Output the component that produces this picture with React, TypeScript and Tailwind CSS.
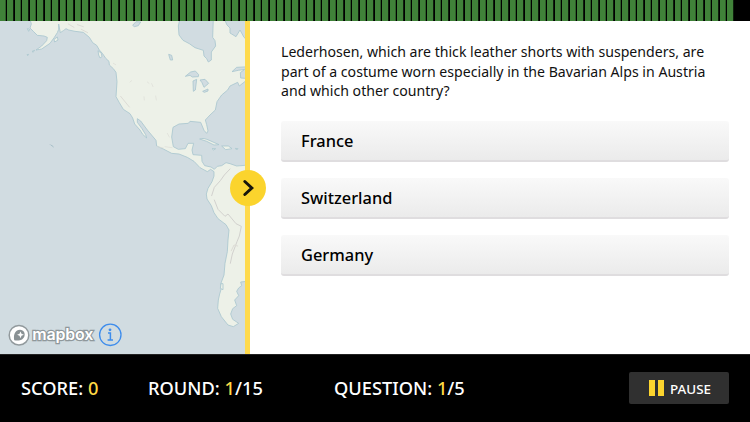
import React, { useState } from 'react';

const answers = ['France', 'Switzerland', 'Germany'];

const WorldMap = () => (
  <svg viewBox="0 63 735 999" className="block h-[333px] w-[245px]" preserveAspectRatio="none">
    <rect y="63" width="735" height="999" fill="#d1dce1" />
    <g fill="#edf1e8" stroke="#a9c6cf" strokeWidth="2.5" strokeLinejoin="round">
      {/* North, Central and South America */}
      <path
        d="M88 50L94 72L90 84L100 94L112 106L132 108L142 112L140 122L125 138L108 150L125 147L150 130L163 112L172 98L176 88L176 72L181 98L190 92L198 86L206 90L225 94L250 97L268 112L278 128L290 136L298 150L307 160L318 176L327 184L328 195L340 206L348 217L351 245L348 290L358 308L370 328L390 341L398 354L404 372L420 390L428 403L440 414L437 404L426 386L412 367L412 356L422 363L442 390L468 421L470 438L490 447L515 460L537 462L562 472L582 484L600 503L622 515L632 508L642 515L642 528L636 545L624 565L619 582L621 597L634 617L642 638L654 656L678 674L687 690L684 720L682 755L675 790L672 825L662 852L664 865L659 882L655 900L653 925L664 950L684 975L700 980L716 970L698 958L692 942L698 926L710 917L704 900L716 887L710 874L716 864L725 857L722 846L760 842L760 498L735 496L710 498L690 491L678 488L665 497L652 499L643 508L633 501L614 497L606 484L605 466L579 464L576 450L581 430L564 430L556 446L535 448L520 440L515 411L519 382L537 372L565 370L570 364L602 367L612 391L620 400L624 393L620 374L616 360L630 345L646 330L651 305L665 285L683 270L690 258L713 247L718 258L738 242L760 230V50Z"
      />
      <path d="M599 417Q610 412 630 422L657 434L642 435L620 424ZM665 438L685 438L696 446L677 449ZM636 446L647 446L641 450ZM706 445L714 446L710 450ZM294 152L304 160L306 170L300 174L296 165ZM162 118L172 111L174 120L164 126ZM82 86L89 88L86 94ZM97 153L104 151L99 157ZM81 164L86 163L83 167ZM663 851L669 851L669 869L661 865Z" />
    </g>
    {/* bays and lakes */}
    <g fill="#d1dce1" stroke="#a9c6cf" strokeWidth="2.5" strokeLinejoin="round">
      <path d="M540 55L535 78L537 105L549 121L568 131L585 143L610 151L612 168L620 176L625 186L634 180L634 156L647 138L645 122L638 112L640 55Z" />
      <path d="M672 55L681 75L690 84L690 99L708 110L720 90L732 112L750 128V50Z" />
      <path d="M696 215L710 202L750 200V236L722 234L721 218L734 208L715 211Z" />
      <path d="M556 229L572 216L586 213L596 224L595 230L577 231L570 226ZM579 243L590 238L586 270L580 274ZM600 240L615 238L626 250L612 262L606 248ZM608 274L624 267L624 273L613 277ZM506 163L515 166L518 180L511 180ZM398 76L408 65L422 66L415 77L403 80Z" />
    </g>
    <g fill="none" stroke="#dddcd6" strokeWidth="3" strokeLinecap="round">
      <path d="M205 72L222 82M232 74L250 80M244 88L263 98M362 289L388 321" />
      <path d="M442 246L447 250M455 251L459 260M467 288L469 300M432 290L433 300M340 190L347 194M390 246L395 242M502 400L508 411M495 440L516 443M472 440L490 444" strokeWidth="2" />
      <path d="M690 507L673 525L661 542L643 562L635 587M643 600L654 628L675 649L684 642L708 671L724 679L718 708L711 725L697 762L691 790" stroke="#d2d1ce" />
      <path d="M694 752L702 735L713 738" />
    </g>
    <path d="M150 433L153 436L157 437L160 442" fill="none" stroke="#a9c0c9" strokeWidth="3" />
  </svg>
);

const MapCredits = () => (
  <svg viewBox="0 0 120 28" className="absolute bottom-[5px] left-1 h-7 w-[120px]">
    <circle cx="15" cy="14.2" r="9.8" fill="#fff" stroke="#929a9d" strokeWidth="1.5" />
    <path d="M10.2 19.2C9.2 13 11.5 8.8 16 8.8C22.3 8.8 22.3 18.2 16 19.2C13.5 19.6 12 19.5 10.2 19.2Z" fill="#899194" />
    <path d="M16.5 10.4L17.5 12.8L19.9 13.8L17.5 14.8L16.5 17.2L15.5 14.8L13.1 13.8L15.5 12.8Z" fill="#fff" />
    <text
      x="28.3"
      y="18.8"
      textLength="61"
      fill="#fff"
      stroke="#8f989b"
      strokeWidth="2.4"
      paintOrder="stroke"
      className="font-['Inter',sans-serif] text-[16px] font-semibold"
    >
      mapbox
    </text>
    <circle cx="106.3" cy="13.8" r="10.7" fill="none" stroke="#3d8cec" strokeWidth="1.3" />
    <circle cx="106" cy="8.8" r="1.4" fill="#3d8cec" />
    <path d="M104 12.1H106.4V18.7M103.6 19H109" fill="none" stroke="#3d8cec" strokeWidth="1.5" />
  </svg>
);

const Stat = ({ label, value, total }: { label: string; value: number; total?: number }) => (
  <div className="whitespace-nowrap">
    {label}: <span className="text-[#ffda45]">{value}</span>
    {total && `/${total}`}
  </div>
);

export default function App() {
  const [selected, setSelected] = useState('');

  return (
    <div className="flex h-[422px] w-[750px] flex-col overflow-hidden bg-black font-['Noto_Sans',sans-serif]">
      <div className="h-[21px] w-[735px] shrink-0 bg-[repeating-linear-gradient(90deg,#408239_0px,#408239_5.2px,#1c3b19_5.8px,#000_6.2px,#000_7.2px,#204a1d_7.5px)]" />

      <main className="flex h-[333px] shrink-0 bg-white">
        <div className="relative w-[250px] shrink-0 border-r-5 border-[#ffda4c]">
          <WorldMap />
          <MapCredits />
          <button className="absolute top-[149px] -right-[21px] flex size-9 items-center justify-center rounded-full bg-[#fbd42d]">
            <svg viewBox="0 0 36 36" className="size-9" fill="none" stroke="#17150c" strokeWidth="3">
              <path d="M14.8 11.5L21.8 18L14.8 24.5" strokeLinecap="round" />
            </svg>
          </button>
        </div>

        <section className="flex-1 pt-[21px] pr-[21px] pl-[31px]">
          <p className="text-[14.12px] leading-[19.5px] whitespace-nowrap text-[#111]">
            Lederhosen, which are thick leather shorts with suspenders, are
            <br />
            part of a costume worn especially in the Bavarian Alps in Austria
            <br />
            and which other country?
          </p>
          <div className="mt-5 flex flex-col gap-4">
            {answers.map(answer => (
              <button
                key={answer}
                onClick={() => setSelected(answer)}
                aria-pressed={selected === answer}
                className="h-[41px] rounded-[3px] border-b-2 border-[#dfdddf] bg-linear-to-b from-[#f9f9f9] to-[#ebebeb] px-5 pt-0.5 text-left text-[16.4px] font-medium text-black"
              >
                {answer}
              </button>
            ))}
          </div>
        </section>
      </main>

      <footer className="flex flex-1 items-center border-t border-[#222] px-[21px] pb-0.5 text-[18.25px] font-medium text-white">
        <div className="w-[127px]"><Stat label="SCORE" value={0} /></div>
        <div className="w-[186px]"><Stat label="ROUND" value={1} total={15} /></div>
        <Stat label="QUESTION" value={1} total={5} />
        <button className="ml-auto flex h-8 w-[100px] items-center justify-center gap-1.5 rounded-[2px] bg-[#303030] pl-0.5 text-[13.4px]">
          <span className="flex gap-[3px]">
            <span className="h-4 w-1.5 bg-[#fcd42e]" />
            <span className="h-4 w-1.5 bg-[#fcd42e]" />
          </span>
          <span className="pt-[3px]">PAUSE</span>
        </button>
      </footer>
    </div>
  );
}
